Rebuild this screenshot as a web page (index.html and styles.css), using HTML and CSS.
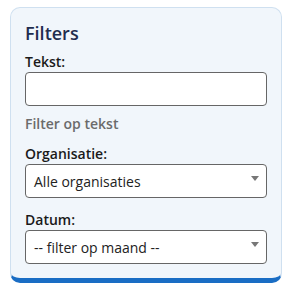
FILE: index.html
```html
<!DOCTYPE html>
<html lang="nl">
<head>
  <meta charset="UTF-8">
  <meta name="viewport" content="width=device-width, initial-scale=1.0">
  <title>Filters</title>
  <link rel="stylesheet" href="styles.css">
</head>
<body>
  <div class="filters">
    <h2>Filters</h2>
    <label for="tekst">Tekst:</label>
    <input type="text" id="tekst">
    <div class="hint">Filter op tekst</div>
    <label for="organisatie">Organisatie:</label>
    <div class="select" id="organisatie">
      <span>Alle organisaties</span>
      <svg width="8" height="5" viewBox="0 0 8 5"><path d="M0 0h8L4 5z" fill="#777"/></svg>
    </div>
    <label for="datum">Datum:</label>
    <div class="select" id="datum">
      <span>-- filter op maand --</span>
      <svg width="8" height="5" viewBox="0 0 8 5"><path d="M0 0h8L4 5z" fill="#777"/></svg>
    </div>
  </div>
</body>
</html>
```

FILE: styles.css
```css
body {
  margin: 0;
  padding: 7px 8px 0 10px;
  font-family: 'Open Sans', sans-serif;
  background: #ffffff;
  color: #222;
}
.filters {
  width: 242px;
  padding: 13px 14px 14px;
  background: #f1f6fb;
  border: 1px solid #cfe0f0;
  border-bottom: 5px solid #1a6dc4;
  border-radius: 10px;
}
.filters h2 {
  margin: 0 0 7px;
  font-size: 18px;
  font-weight: 600;
  color: #1f2d4f;
  line-height: 24px;
}
.filters label {
  display: block;
  font-size: 14px;
  font-weight: 600;
  color: #1a1a1a;
  line-height: 20px;
}
.filters input {
  display: block;
  box-sizing: border-box;
  width: 100%;
  height: 34px;
  margin: 0 0 8px;
  border: 1px solid #666;
  border-radius: 4px;
  background: #fff;
}
.hint {
  font-size: 14px;
  font-weight: 600;
  color: #6b6b6b;
  line-height: 20px;
  margin-bottom: 10px;
}
.select {
  display: flex;
  align-items: center;
  justify-content: space-between;
  box-sizing: border-box;
  height: 34px;
  margin: 0 0 12px;
  padding: 0 7px 0 8px;
  border: 1px solid #666;
  border-radius: 4px;
  background: #fff;
  font-size: 14px;
  color: #222;
}
.select svg {
  margin-top: -6px;
}
.select:last-child {
  margin-bottom: 0;
}
```
